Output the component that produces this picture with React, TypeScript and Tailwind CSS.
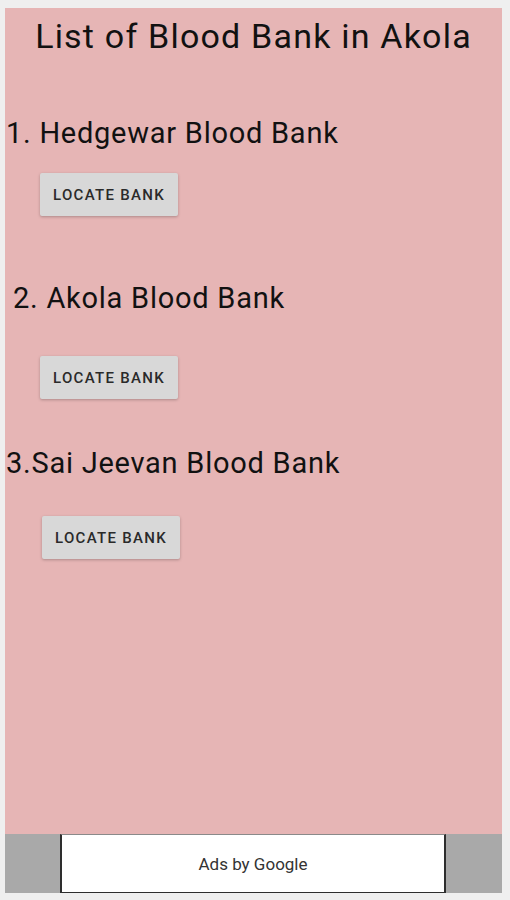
const banks = [
  { name: "1. Hedgewar Blood Bank", textClass: "mt-[66px] pl-[1px]", btnClass: "mt-[25px] ml-[35px]" },
  { name: "2. Akola Blood Bank", textClass: "mt-[68px] pl-[8px]", btnClass: "mt-[43px] ml-[35px]" },
  { name: "3.Sai Jeevan Blood Bank", textClass: "mt-[50px] pl-[1px]", btnClass: "mt-[38px] ml-[37px]" },
];

export default function App() {
  return (
    <div
      className="flex h-[900px] w-[510px] flex-col bg-[#efefef] pb-[7px] pl-[5px] pr-[8px] pt-[8px]"
      style={{ fontFamily: "Roboto, 'Noto Sans', sans-serif" }}
    >
      {/* main list panel */}
      <div className="flex flex-1 flex-col bg-[#e6b5b5] text-[#111]">
        <h1 className="mt-[11px] text-center text-[34px] font-normal leading-none tracking-[1.2px]">
          List of Blood Bank in Akola
        </h1>

        {banks.map((b) => (
          <div key={b.name} className="flex flex-col items-start">
            <p className={`text-[29px] leading-none tracking-[0.75px] ${b.textClass}`}>{b.name}</p>
            <button
              className={`flex h-[43px] w-[138px] items-center justify-center rounded-[2px] bg-[#d8d8d8] pt-[2px] text-[15px] font-medium tracking-[1.3px] text-[#2a2a2a] shadow-[0_1px_3px_rgba(0,0,0,0.25)] ${b.btnClass}`}
            >
              LOCATE BANK
            </button>
          </div>
        ))}
      </div>

      {/* ad banner */}
      <div className="flex h-[59px] bg-[#a9a9a9]">
        <div className="ml-[55px] flex w-[386px] items-center justify-center border-x-2 border-b border-[#2e2e2e] border-t border-t-[#8a8a8a] bg-white pt-[2px] text-[17px] text-[#333]">
          Ads by Google
        </div>
      </div>
    </div>
  );
}
